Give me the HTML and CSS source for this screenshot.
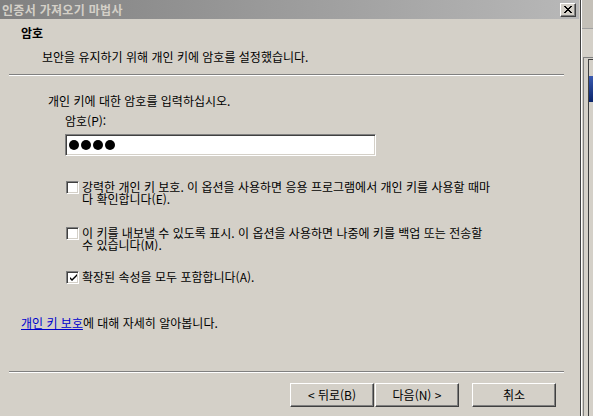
FILE: index.html
```html
<!DOCTYPE html>
<html lang="ko">
<head>
<meta charset="utf-8">
<link rel="stylesheet" href="styles.css">
</head>
<body>
<div class="desk">
  <div class="dialog">
    <div class="titlebar">
      <span class="title">인증서 가져오기 마법사</span>
      <span class="close"><svg width="10" height="9" viewBox="0 0 10 9"><path d="M1 1 L8 8 M2 1 L9 8 M8 1 L1 8 M9 1 L2 8" stroke="#000" stroke-width="1" fill="none" shape-rendering="crispEdges"/></svg></span>
    </div>
    <div class="header">
      <div class="h-title">암호</div>
      <div class="h-sub">보안을 유지하기 위해 개인 키에 암호를 설정했습니다.</div>
    </div>
    <div class="sep"></div>
    <div class="content">
      <div class="prompt">개인 키에 대한 암호를 입력하십시오.</div>
      <div class="field-label">암호(P):</div>
      <div class="input"><span class="dot"></span><span class="dot"></span><span class="dot"></span><span class="dot"></span></div>
      <div class="opt opt1">
        <span class="cb"></span>
        <span class="opt-text">강력한 개인 키 보호. 이 옵션을 사용하면 응용 프로그램에서 개인 키를 사용할 때마<br>다 확인합니다(E).</span>
      </div>
      <div class="opt opt2">
        <span class="cb"></span>
        <span class="opt-text">이 키를 내보낼 수 있도록 표시. 이 옵션을 사용하면 나중에 키를 백업 또는 전송할<br>수 있습니다(M).</span>
      </div>
      <div class="opt opt3">
        <span class="cb checked"><svg width="9" height="9" viewBox="0 0 9 9"><path d="M1 3 L1 5 L3 7 L8 2 L8 0 L3 5 Z" fill="#000"/></svg></span>
        <span class="opt-text">확장된 속성을 모두 포함합니다(A).</span>
      </div>
      <div class="more"><span class="link">개인 키 보호</span>에 대해 자세히 알아봅니다.</div>
    </div>
    <div class="sep sep-bottom"></div>
    <div class="buttons">
      <span class="btn">&lt; 뒤로(B)</span>
      <span class="btn">다음(N) &gt;</span>
      <span class="btn btn-cancel">취소</span>
    </div>
  </div>
  <div class="behind">
    <div class="behind-top"></div>
    <div class="behind-frame">
      <div class="behind-inner"><div class="behind-blue"></div></div>
    </div>
  </div>
</div>
</body>
</html>
```
FILE: styles.css
```css
* { box-sizing: border-box; }
html, body { margin: 0; padding: 0; }
body {
  width: 593px;
  height: 416px;
  overflow: hidden;
  background: #d4d0c8;
  font-family: "Noto Sans CJK KR", "Noto Sans", sans-serif;
  font-size: 12px;
  color: #000;
}
.desk { display: flex; height: 416px; }
.dialog {
  width: 581px;
  flex: none;
  background: #d4d0c8;
  border-right: 1px solid #404040;
  position: relative;
}
.titlebar {
  height: 19px;
  margin-right: 1px;
  background: linear-gradient(to right, #808080, #b8b8b8);
  display: flex;
  align-items: center;
  justify-content: space-between;
  padding: 0 3px 0 2px;
}
.title {
  color: #d4d0c8;
  font-weight: bold;
  font-size: 12px;
  line-height: 14px;
  letter-spacing: 0.3px;
}
.close {
  width: 16px;
  height: 14px;
  background: #d4d0c8;
  border-top: 1px solid #fff;
  border-left: 1px solid #fff;
  border-right: 1px solid #404040;
  border-bottom: 1px solid #404040;
  box-shadow: inset -1px -1px 0 #808080;
  display: flex;
  align-items: center;
  justify-content: center;
}
.header { padding: 7px 0 0 21px; }
.h-title { font-weight: bold; line-height: 14px; }
.h-sub { margin: 10px 0 0 21px; line-height: 14px; }
.sep {
  margin: 10px 16px 0 9px;
  height: 2px;
  border-top: 1px solid #808080;
  border-bottom: 1px solid #fff;
}
.content { padding: 18px 0 0 48px; height: 295px; }
.prompt { line-height: 14px; }
.field-label { margin: 6px 0 0 17px; line-height: 14px; }
.input {
  margin: 6px 0 0 17px;
  width: 311px;
  height: 22px;
  background: #fff;
  border-top: 1px solid #808080;
  border-left: 1px solid #808080;
  border-right: 1px solid #fff;
  border-bottom: 1px solid #fff;
  box-shadow: inset 1px 1px 0 #404040, inset -1px -1px 0 #d4d0c8;
  display: flex;
  align-items: center;
  gap: 2px;
  padding-left: 3px;
}
.dot { width: 10px; height: 10px; border-radius: 50%; background: #000; }
.opt { display: flex; align-items: flex-start; margin-left: 18px; }
.opt1 { margin-top: 25px; }
.opt2 { margin-top: 22px; }
.opt3 { margin-top: 20px; }
.cb {
  width: 13px;
  height: 13px;
  flex: none;
  margin-top: 0;
  background: #fff;
  border-top: 1px solid #808080;
  border-left: 1px solid #808080;
  border-right: 1px solid #fff;
  border-bottom: 1px solid #fff;
  box-shadow: inset 1px 1px 0 #404040, inset -1px -1px 0 #d4d0c8;
  display: flex;
  align-items: center;
  justify-content: center;
}
.cb svg { margin: 1px 0 0 1px; }
.opt-text { margin-left: 3px; line-height: 12px; }
.more { margin: 32px 0 0 -27px; line-height: 14px; }
.link { color: #0000cc; text-decoration: underline; }
.sep-bottom { margin-top: 0; }
.buttons { display: flex; padding: 10px 0 0 290px; }
.btn {
  width: 84px;
  height: 24px;
  background: #d4d0c8;
  border-top: 1px solid #fff;
  border-left: 1px solid #fff;
  border-right: 1px solid #404040;
  border-bottom: 1px solid #404040;
  box-shadow: inset -1px -1px 0 #808080;
  display: flex;
  align-items: center;
  justify-content: center;
  line-height: 14px;
}
.btn + .btn { margin-left: 1px; }
.btn-cancel { margin-left: 13px !important; }
.behind { flex: 1; position: relative; background: #d4d0c8; border-left: 1px solid #fff; }
.behind-top { height: 29px; background: #c4c0b8; border-bottom: 1px solid #a0a0a0; }
.behind-frame {
  margin: 28px 0 0 1px;
  height: 360px;
  border-left: 1px solid #808080;
  border-top: 1px solid #808080;
  padding: 1px 0 0 4px;
}
.behind-inner { height: 100%; border-left: 1px solid #404040; border-top: 1px solid #404040; padding-top: 16px; }
.behind-blue { height: 26px; background: linear-gradient(to bottom, #3a5ab0, #0a246a); }
```
